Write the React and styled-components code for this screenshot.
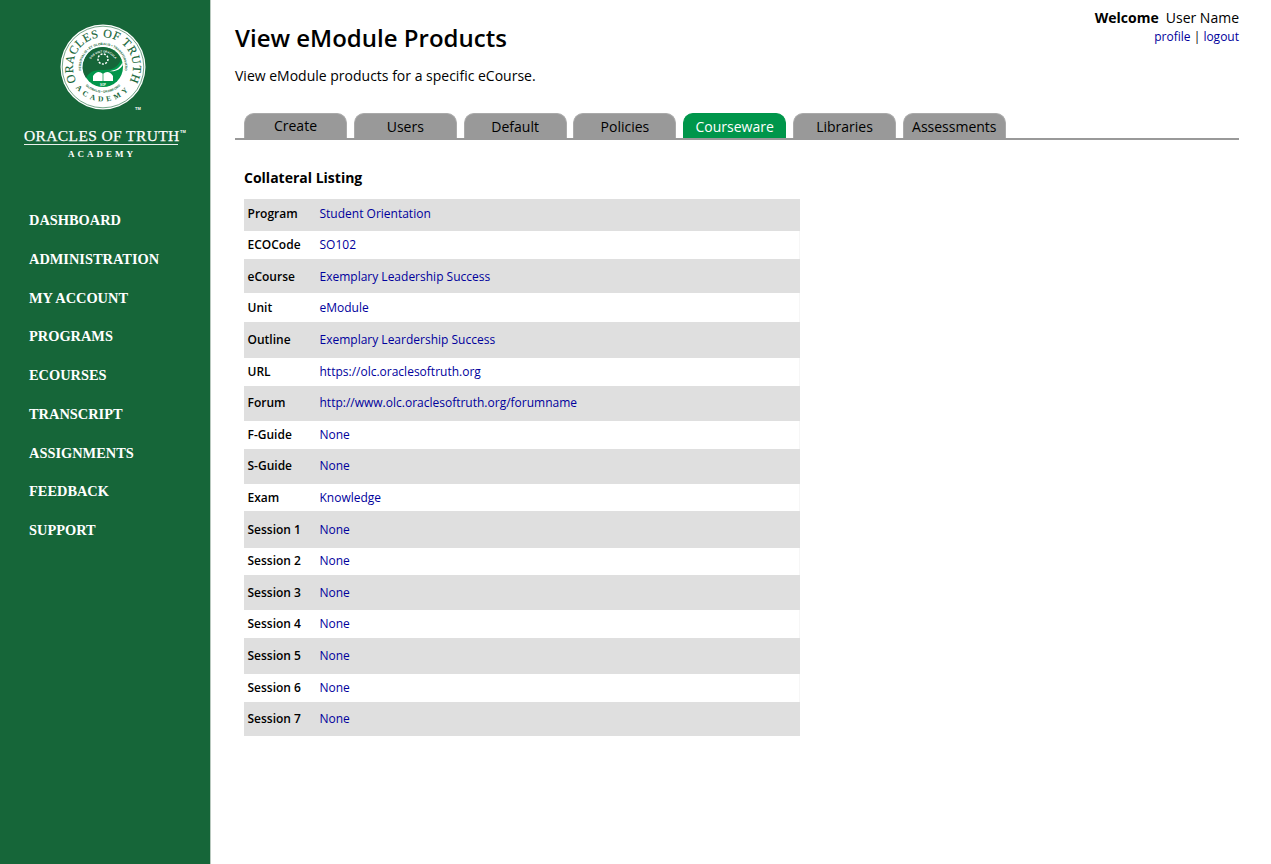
import React from 'react'
import styled, { createGlobalStyle } from 'styled-components'

const GlobalStyle = createGlobalStyle`
  html, body {
    margin: 0;
    padding: 0;
    background: #fff;
    font-family: "Open Sans", "Liberation Sans", sans-serif;
    color: #000;
  }
`

const Page = styled.div`
  display: flex;
  min-height: 864px;
`

const Sidebar = styled.aside`
  width: 210px;
  flex: none;
  background: #166639;
  border-right: 1px solid #b9c9bf;
`

const LogoWrap = styled.div`
  display: flex;
  flex-direction: column;
  align-items: center;
  height: 190px;
  padding-top: 24px;
  box-sizing: border-box;
`

const Wordmark = styled.div`
  margin: 18px 8px 0 0;
  width: 154px;
  font-family: "Liberation Serif", serif;
  color: #fff;
  text-align: center;
  position: relative;
`

const WordmarkTop = styled.div`
  font-size: 15.5px;
  line-height: 15px;
  letter-spacing: 0.38px;
  white-space: nowrap;
  padding-bottom: 1px;
  border-bottom: 1px solid #e9f0ec;
  -webkit-text-stroke: 0.25px #fff;
`

const Trademark = styled.span`
  position: absolute;
  top: 1px;
  left: 156px;
  font-family: "Liberation Sans", sans-serif;
  font-size: 4px;
  font-weight: bold;
  line-height: 5px;
  letter-spacing: 0;
  -webkit-text-stroke: 0;
`

const WordmarkBottom = styled.div`
  font-size: 9px;
  font-weight: bold;
  line-height: 11px;
  letter-spacing: 3px;
  margin: 4px 0 0 2px;
`

const Nav = styled.nav`
  display: flex;
  flex-direction: column;
  padding: 11px 0 0 29px;
`

const NavItem = styled.a`
  display: block;
  height: 38.75px;
  line-height: 38.75px;
  font-family: "Liberation Serif", serif;
  font-weight: bold;
  font-size: 14.4px;
  color: #fff;
  white-space: nowrap;
`

const Main = styled.main`
  flex: 1;
  min-width: 0;
  padding: 0 32px 0 24px;
  position: relative;
`

const UserBox = styled.div`
  position: absolute;
  top: 8px;
  right: 32px;
  text-align: right;
`

const UserLine = styled.div`
  font-size: 14px;
  line-height: 19px;
  b {
    font-weight: 700;
    margin-right: 7px;
  }
`

const UserLinks = styled.div`
  font-size: 12px;
  line-height: 18px;
  margin-top: 1px;
`

const Link = styled.a`
  color: #00009c;
  text-decoration: none;
`

const Title = styled.h1`
  margin: 0;
  padding-top: 21px;
  font-size: 24px;
  line-height: 33px;
  font-weight: 600;
`

const Intro = styled.p`
  margin: 12px 0 0 0;
  font-size: 14px;
  line-height: 19px;
`

const TabBar = styled.div`
  display: flex;
  gap: 6.8px;
  margin-top: 28px;
  padding-left: 9px;
  height: 25px;
  border-bottom: 2px solid #999;
`

const Tab = styled.div`
  width: 103px;
  height: 25px;
  border-radius: 10px 10px 0 0;
  border: 1px solid ${props => (props.active ? '#00964b' : '#aaa')};
  border-bottom: none;
  background: ${props => (props.active ? '#00964b' : '#999')};
  color: ${props => (props.active ? '#fff' : '#000')};
  font-size: 14px;
  line-height: ${props => (props.raised ? '23px' : '25px')};
  text-align: center;
  white-space: nowrap;
  box-sizing: border-box;
`

const Section = styled.section`
  padding: 28px 0 0 9px;
`

const SectionTitle = styled.h2`
  margin: 0 0 11px 0;
  font-size: 14px;
  line-height: 20px;
  font-weight: 700;
`

const Listing = styled.div`
  width: 556px;
  display: flex;
  flex-direction: column;
`

const Row = styled.div`
  display: flex;
  align-items: center;
  height: ${props => props.h}px;
  box-sizing: border-box;
  padding-bottom: ${props => props.pad}px;
  background: ${props => (props.shade ? '#dfdfdf' : '#fff')};
  border-right: 1px solid ${props => (props.shade ? '#dfdfdf' : '#f6f6f6')};
  font-size: 12px;
`

const Label = styled.div`
  width: 75.5px;
  padding-left: 3.5px;
  box-sizing: border-box;
  font-weight: 600;
  flex: none;
`

const rows = [
  ['Program', 'Student Orientation', 32, 4],
  ['ECOCode', 'SO102', 28, 2],
  ['eCourse', 'Exemplary Leadership Success', 34, 0],
  ['Unit', 'eModule', 29, 0],
  ['Outline', 'Exemplary Leardership Success', 36, 2],
  ['URL', 'https://olc.oraclesoftruth.org', 28, 2],
  ['Forum', 'http://www.olc.oraclesoftruth.org/forumname', 35, 2],
  ['F-Guide', 'None', 28, 2],
  ['S-Guide', 'None', 35, 2],
  ['Exam', 'Knowledge', 27, 0],
  ['Session 1', 'None', 37, 0],
  ['Session 2', 'None', 27, 2],
  ['Session 3', 'None', 35, 0],
  ['Session 4', 'None', 28, 2],
  ['Session 5', 'None', 36, 2],
  ['Session 6', 'None', 28, 2],
  ['Session 7', 'None', 34, 2],
]

const navItems = ['DASHBOARD', 'ADMINISTRATION', 'MY ACCOUNT', 'PROGRAMS', 'ECOURSES', 'TRANSCRIPT', 'ASSIGNMENTS', 'FEEDBACK', 'SUPPORT']
const tabs = ['Create', 'Users', 'Default', 'Policies', 'Courseware', 'Libraries', 'Assessments']

const DARK = '#166639'
const BRIGHT = '#00964b'

const Seal = () => (
  <svg width="90" height="86" viewBox="0 0 90 86">
    <defs>
      <path id="sealTop" d="M 15 54 A 30 30 0 1 1 71 54" />
      <path id="sealBottom" d="M 10.6 54.8 A 34.5 34.5 0 0 0 75.4 54.8" />
      <path id="sealRing" d="M 24 54 A 22 22 0 1 1 62 54" />
      <path id="sealRingB" d="M 19.4 53 A 25.6 25.6 0 0 0 66.6 53" />
      <path id="sealMotto" d="M 28.5 43 A 14.5 14.5 0 0 1 57.5 43" />
    </defs>
    <circle cx="43" cy="43" r="42.5" fill="#fff" />
    <circle cx="43" cy="43" r="40.8" fill="none" stroke={DARK} strokeWidth="0.6" />
    <text fontFamily="Liberation Serif, serif" fontSize="12" fill={DARK} stroke={DARK} strokeWidth="0.15" letterSpacing="0.5">
      <textPath href="#sealTop" startOffset="50%" textAnchor="middle">ORACLES OF TRUTH</textPath>
    </text>
    <text fontFamily="Liberation Serif, serif" fontSize="7.5" fontWeight="bold" fill={DARK} letterSpacing="3.4">
      <textPath href="#sealBottom" startOffset="50%" textAnchor="middle">ACADEMY</textPath>
    </text>
    <text fontFamily="Liberation Sans, sans-serif" fontSize="3.2" fontWeight="bold" fill={DARK}>
      <textPath href="#sealRing" startOffset="50%" textAnchor="middle">PERSONALIS • ET GLOBALIS • TRANSFORMATIO</textPath>
    </text>
    <text fontFamily="Liberation Sans, sans-serif" fontSize="3.2" fontWeight="bold" fill={DARK}>
      <textPath href="#sealRingB" startOffset="50%" textAnchor="middle">GLOBALIS • DRAWFORD</textPath>
    </text>
    <circle cx="43" cy="43" r="20" fill={BRIGHT} />
    <path d="M 43 23 A 20 20 0 0 0 26 54 C 30 46 37 46 44 46 C 52 46 59 43 61 35 A 20 20 0 0 0 43 23 Z" fill={DARK} />
    <path d="M 62.5 38 C 60 45 53 47 49 47 C 55 48 60 46 62.8 41 Z" fill="#fff" />
    <text fontFamily="Liberation Sans, sans-serif" fontSize="2.9" fontWeight="bold" fill="#fff">
      <textPath href="#sealMotto" startOffset="50%" textAnchor="middle">SOS VINT ORACULA</textPath>
    </text>
    <circle cx="43" cy="35" r="5" fill="none" stroke="#fff" strokeWidth="1.5" strokeDasharray="2 1.4" />
    <path d="M 33 52 C 36 47 40 47 43 50 C 46 47 50 47 53 52 L 53 57 L 33 57 Z" fill="#fff" />
    <path d="M 43 50 L 43 57" stroke={BRIGHT} strokeWidth="0.7" />
    <text x="43" y="61.5" fontFamily="Liberation Sans, sans-serif" fontSize="2.8" fontWeight="bold" fill="#fff" textAnchor="middle">SOP</text>
    <text x="78" y="85.5" fontFamily="Liberation Sans, sans-serif" fontSize="4" fontWeight="bold" fill="#fff" textAnchor="middle">TM</text>
  </svg>
)

export default function App() {
  return (
    <Page>
      <GlobalStyle />
      <Sidebar>
        <LogoWrap>
          <Seal />
          <Wordmark>
            <WordmarkTop>ORACLES OF TRUTH<Trademark>TM</Trademark></WordmarkTop>
            <WordmarkBottom>ACADEMY</WordmarkBottom>
          </Wordmark>
        </LogoWrap>
        <Nav>
          {navItems.map(item => (
            <NavItem key={item}>{item}</NavItem>
          ))}
        </Nav>
      </Sidebar>
      <Main>
        <UserBox>
          <UserLine><b>Welcome</b>User Name</UserLine>
          <UserLinks><Link>profile</Link> | <Link>logout</Link></UserLinks>
        </UserBox>
        <Title>View eModule Products</Title>
        <Intro>View eModule products for a specific eCourse.</Intro>
        <TabBar>
          {tabs.map(tab => (
            <Tab key={tab} active={tab === 'Courseware'} raised={tab === 'Create'}>{tab}</Tab>
          ))}
        </TabBar>
        <Section>
          <SectionTitle>Collateral Listing</SectionTitle>
          <Listing>
            {rows.map(([label, value, h, pad], i) => (
              <Row key={label} h={h} pad={pad} shade={i % 2 === 0}>
                <Label>{label}</Label>
                <Link>{value}</Link>
              </Row>
            ))}
          </Listing>
        </Section>
      </Main>
    </Page>
  )
}
